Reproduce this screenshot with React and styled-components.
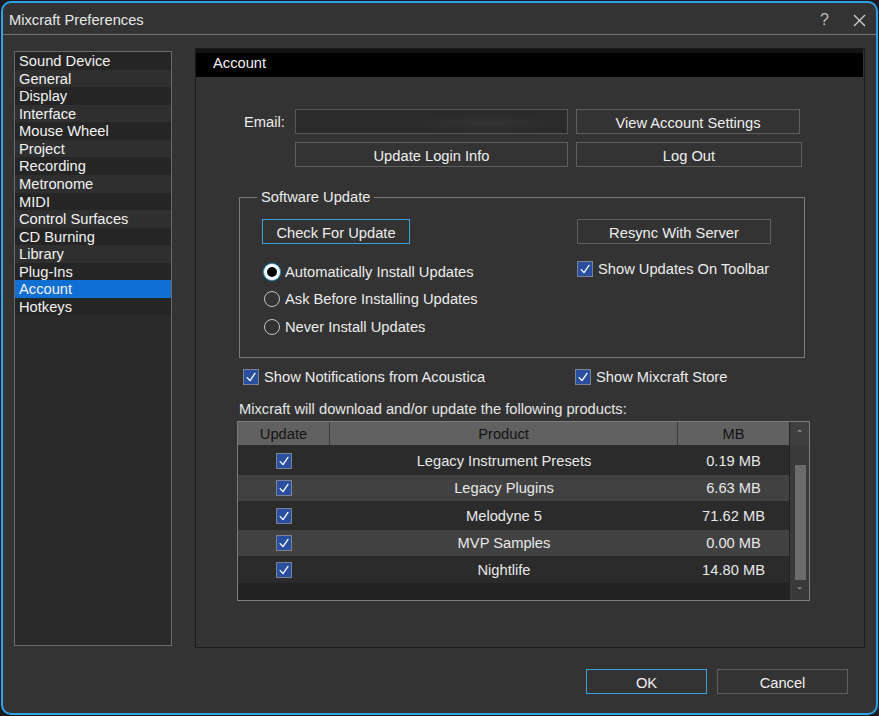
import React from "react";
import styled, { createGlobalStyle } from "styled-components";

const GlobalStyle = createGlobalStyle`
  * { box-sizing: border-box; }
  html, body { margin: 0; padding: 0; background: #1c1c1e; }
  body {
    font-family: "Liberation Sans", Arial, sans-serif;
    font-size: 14.7px;
    color: #ececec;
  }
`;

const sections = [
  "Sound Device",
  "General",
  "Display",
  "Interface",
  "Mouse Wheel",
  "Project",
  "Recording",
  "Metronome",
  "MIDI",
  "Control Surfaces",
  "CD Burning",
  "Library",
  "Plug-Ins",
  "Account",
  "Hotkeys",
];

const products = [
  { name: "Legacy Instrument Presets", size: "0.19 MB" },
  { name: "Legacy Plugins", size: "6.63 MB" },
  { name: "Melodyne 5", size: "71.62 MB" },
  { name: "MVP Samples", size: "0.00 MB" },
  { name: "Nightlife", size: "14.80 MB" },
];

const rowHeights = [29, 26, 29, 26, 27];

const CheckBox = ({ checked = true }) => (
  <Box>
    {checked && (
      <svg width="14" height="14" viewBox="0 0 14 14">
        <polyline
          points="3.2,7.6 6,10.6 11,3.4"
          fill="none"
          stroke="#ffffff"
          strokeWidth="1.3"
          strokeLinecap="round"
          strokeLinejoin="round"
        />
      </svg>
    )}
  </Box>
);

const App = () => {
  return (
    <>
      <GlobalStyle />
      <Window>
        <TitleBar>
          <Title>Mixcraft Preferences</Title>
          <TitleButtons>
            <Help>?</Help>
            <svg width="13" height="13" viewBox="0 0 13 13">
              <line x1="1" y1="1" x2="12" y2="12" stroke="#d0d0d0" strokeWidth="1.2" />
              <line x1="12" y1="1" x2="1" y2="12" stroke="#d0d0d0" strokeWidth="1.2" />
            </svg>
          </TitleButtons>
        </TitleBar>

        <Main>
          <SectionList>
            {sections.map((s, i) => (
              <SectionItem key={s} $odd={i % 2 === 1} $selected={s === "Account"}>
                {s}
              </SectionItem>
            ))}
          </SectionList>

          <Panel>
            <PanelHeader>Account</PanelHeader>
            <PanelBody>
              <AccountGrid>
                <Label>Email:</Label>
                <EmailInput />
                <Button $w={224}>View Account Settings</Button>
                <span />
                <Button>Update Login Info</Button>
                <Button>Log Out</Button>
              </AccountGrid>

              <Group>
                <Legend>Software Update</Legend>
                <GroupGrid>
                  <Column>
                    <Button $w={148} $focused>
                      Check For Update
                    </Button>
                    <RadioList>
                      <RadioRow>
                        <Radio $checked />
                        Automatically Install Updates
                      </RadioRow>
                      <RadioRow>
                        <Radio />
                        Ask Before Installing Updates
                      </RadioRow>
                      <RadioRow>
                        <Radio />
                        Never Install Updates
                      </RadioRow>
                    </RadioList>
                  </Column>
                  <Column>
                    <Button $w={194}>Resync With Server</Button>
                    <CheckRow $top={15}>
                      <CheckBox />
                      Show Updates On Toolbar
                    </CheckRow>
                  </Column>
                </GroupGrid>
              </Group>

              <OptionsRow>
                <CheckRow>
                  <CheckBox />
                  Show Notifications from Acoustica
                </CheckRow>
                <CheckRow>
                  <CheckBox />
                  Show Mixcraft Store
                </CheckRow>
              </OptionsRow>

              <Note>Mixcraft will download and/or update the following products:</Note>

              <Table>
                <TableData>
                  <HeaderRow>
                    <HeaderCell>Update</HeaderCell>
                    <HeaderCell>Product</HeaderCell>
                    <HeaderCell>MB</HeaderCell>
                  </HeaderRow>
                  {products.map((p, i) => (
                    <DataRow key={p.name} $alt={i % 2 === 1} style={{ height: rowHeights[i] }}>
                      <Cell>
                        <CheckBox />
                      </Cell>
                      <Cell>{p.name}</Cell>
                      <Cell>{p.size}</Cell>
                    </DataRow>
                  ))}
                </TableData>
                <ScrollBar>
                  <ScrollArrow $top>ˆ</ScrollArrow>
                  <ScrollTrack>
                    <Thumb />
                  </ScrollTrack>
                  <ScrollArrow>ˇ</ScrollArrow>
                </ScrollBar>
              </Table>
            </PanelBody>
          </Panel>
        </Main>

        <Footer>
          <Button $w={121} $focused>
            OK
          </Button>
          <Button $w={131}>Cancel</Button>
        </Footer>
      </Window>
    </>
  );
};

const Window = styled.div`
  margin: 1px;
  width: 877px;
  height: 714px;
  border: 2px solid #2ba3e6;
  border-radius: 10px;
  background: #333333;
  display: flex;
  flex-direction: column;
  overflow: hidden;
`;

const TitleBar = styled.div`
  height: 32px;
  flex-shrink: 0;
  border-bottom: 1px solid #767676;
  display: flex;
  align-items: center;
  justify-content: space-between;
  padding: 3px 10px 0 6px;
`;

const Title = styled.div`
  color: #e8e8e8;
`;

const TitleButtons = styled.div`
  display: flex;
  align-items: center;
  gap: 24px;
`;

const Help = styled.span`
  color: #bdbdbd;
  font-size: 16px;
`;

const Main = styled.div`
  display: flex;
  align-items: flex-start;
  gap: 23px;
  padding: 13px 0 0 11px;
`;

const SectionList = styled.div`
  margin-top: 3px;
  width: 158px;
  height: 595px;
  border: 1px solid #6a6a6a;
  background: #2a2a2a;
  display: flex;
  flex-direction: column;
`;

const SectionItem = styled.div`
  height: 17.57px;
  line-height: 17.57px;
  padding: 1px 0 0 4px;
  color: #f2f2f2;
  background: ${(p) => (p.$selected ? "#0f6fd2" : p.$odd ? "#2f2f2f" : "#252525")};
`;

const Panel = styled.div`
  width: 670px;
  height: 600px;
  border: 1px solid #1a1a1a;
  display: flex;
  flex-direction: column;
`;

const PanelHeader = styled.div`
  height: 28px;
  margin-right: 1px;
  background: #000;
  box-shadow: inset 0 4px 0 #131313;
  display: flex;
  align-items: center;
  padding: 0 0 0 17px;
  color: #f0f0f0;
`;

const PanelBody = styled.div`
  display: flex;
  flex-direction: column;
  align-items: flex-start;
  padding-left: 41px;
`;

const AccountGrid = styled.div`
  margin: 32px 0 0 7px;
  display: grid;
  grid-template-columns: 43px 273px 226px;
  grid-auto-rows: 25px;
  column-gap: 8px;
  row-gap: 8px;
  align-items: center;
`;

const Label = styled.span`
  color: #ececec;
`;

const EmailInput = styled.div`
  height: 25px;
  border: 1px solid #575757;
  background: radial-gradient(ellipse 80px 8px at 70% 55%, rgba(255, 255, 255, 0.04), transparent),
    #2b2b2b;
`;

const Button = styled.div`
  width: ${(p) => (p.$w ? `${p.$w}px` : "100%")};
  height: 25px;
  border: 1px solid ${(p) => (p.$focused ? "#3ba0dc" : "#5e5e5e")};
  background: #333;
  color: #efefef;
  display: flex;
  align-items: center;
  justify-content: center;
  padding-top: 2px;
  flex-shrink: 0;
`;

const Group = styled.fieldset`
  margin: 22px 0 0 2px;
  width: 566px;
  height: 169px;
  padding: 13px 0 0 22px;
  border: 1px solid #7a7a7a;
  min-inline-size: 0;
`;

const Legend = styled.legend`
  margin-left: -5px;
  padding: 0 4px;
  line-height: 17px;
  color: #ececec;
`;

const GroupGrid = styled.div`
  display: grid;
  grid-template-columns: 315px auto;
`;

const Column = styled.div`
  display: flex;
  flex-direction: column;
  align-items: flex-start;
`;

const RadioList = styled.div`
  margin-top: 14px;
  display: flex;
  flex-direction: column;
`;

const RadioRow = styled.div`
  height: 27.5px;
  display: flex;
  align-items: center;
  gap: 5px;
  padding-left: 2px;
  color: #ececec;
`;

const Radio = styled.span`
  width: 16px;
  height: 16px;
  border-radius: 50%;
  flex-shrink: 0;
  ${(p) =>
    p.$checked
      ? `
    background: #000;
    border: 3px solid #fff;
    box-shadow: 0 0 0 1px #3ba0dc;
  `
      : `
    border: 1.5px solid #c4c4c4;
    background: transparent;
  `}
`;

const CheckRow = styled.div`
  margin-top: ${(p) => p.$top || 0}px;
  height: 20px;
  display: flex;
  align-items: center;
  gap: 5px;
  color: #ececec;
`;

const Box = styled.span`
  width: 16px;
  height: 16px;
  flex-shrink: 0;
  background: #2a4f9f;
  border: 1px solid #7b8296;
  display: flex;
  align-items: center;
  justify-content: center;
`;

const OptionsRow = styled.div`
  margin: 9px 0 0 6px;
  display: grid;
  grid-template-columns: 332px auto;
`;

const Note = styled.div`
  margin: 14px 0 0 2px;
  line-height: 17px;
  color: #e6e6e6;
`;

const Table = styled.div`
  margin-top: 3px;
  width: 573px;
  height: 180px;
  border: 1px solid #7c7c7c;
  background: #222;
  display: flex;
`;

const TableData = styled.div`
  flex: 1;
  display: flex;
  flex-direction: column;
`;

const HeaderRow = styled.div`
  height: 24px;
  display: grid;
  grid-template-columns: 92px 348px 1fr;
  background: #616161;
  border-bottom: 1px solid #2e2e2e;
`;

const HeaderCell = styled.div`
  display: flex;
  align-items: center;
  justify-content: center;
  padding-top: 1px;
  color: #141414;
  border-right: 1px solid #3a3a3a;
  &:last-child {
    border-right: none;
  }
`;

const DataRow = styled.div`
  display: grid;
  grid-template-columns: 92px 348px 1fr;
  background: ${(p) => (p.$alt ? "#414141" : "#2b2b2b")};
`;

const Cell = styled.div`
  display: flex;
  align-items: center;
  justify-content: center;
  color: #e8e8e8;
`;

const ScrollBar = styled.div`
  width: 19px;
  margin-left: 1px;
  background: #3a3a3a;
  display: flex;
  flex-direction: column;
`;

const ScrollArrow = styled.div`
  height: ${(p) => (p.$top ? 24 : 16)}px;
  background: ${(p) => (p.$top ? "#3f3f3f" : "#393939")};
  color: #a8a8a8;
  font-size: 12px;
  line-height: 1;
  display: flex;
  align-items: center;
  justify-content: center;
  padding-top: ${(p) => (p.$top ? 4 : 2)}px;
`;

const ScrollTrack = styled.div`
  flex: 1;
  padding: 19px 3px 0 5px;
`;

const Thumb = styled.div`
  height: 115px;
  background: #6c6c6c;
`;

const Footer = styled.div`
  margin-top: 21px;
  padding-right: 28px;
  display: flex;
  justify-content: flex-end;
  gap: 10px;
`;

export default App;
